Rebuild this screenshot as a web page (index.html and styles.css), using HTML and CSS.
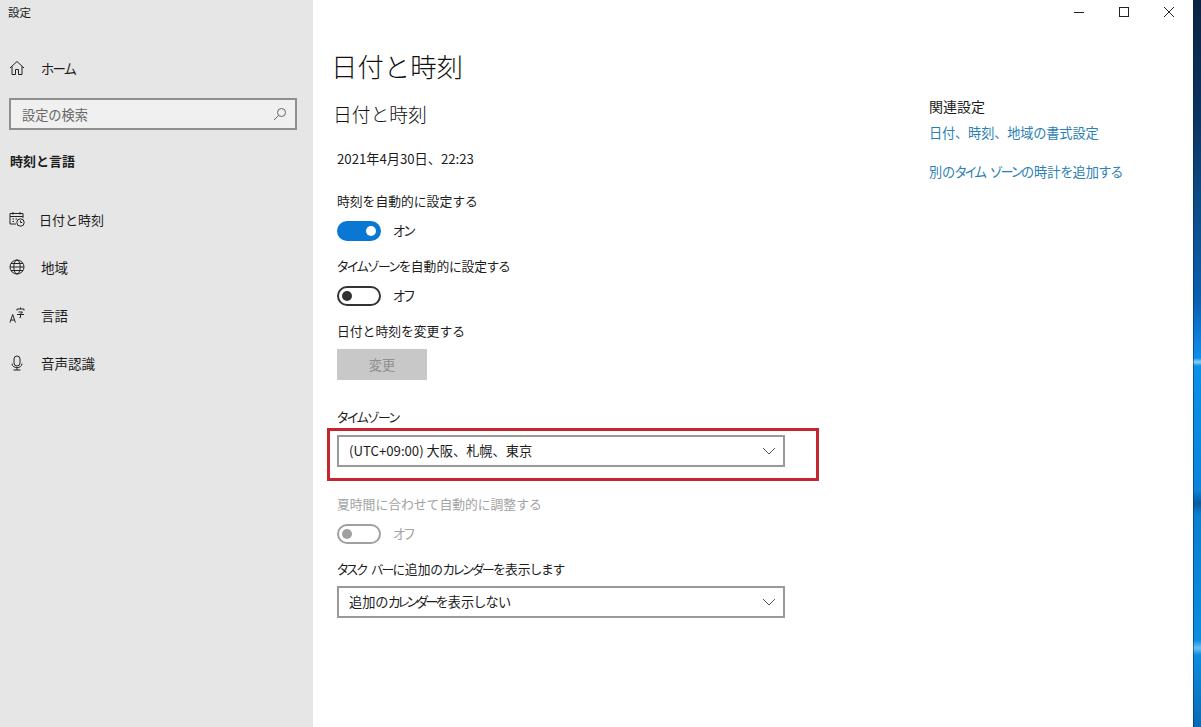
FILE: index.html
```html
<!DOCTYPE html>
<html lang="ja">
<head>
<meta charset="utf-8">
<title>設定</title>
<link rel="stylesheet" href="styles.css">
</head>
<body>
<div class="window">
  <aside class="sidebar">
    <div class="app-title">設定</div>
    <div class="nav-item home">
      <svg class="icon" viewBox="0 0 16 16"><path d="M1 8 8 1.500 15 8M3 6.500V14.500H6.500V9.500H9.500V14.500H13V6.500"/></svg>
      <span class="kana k-wide">ホーム</span>
    </div>
    <div class="search">
      <span>設定の検索</span>
      <svg class="search-icon" viewBox="0 0 14 14"><circle cx="8.500" cy="5.500" r="4"/><path d="M5.500 8.500 1 13"/></svg>
    </div>
    <div class="section-title">時刻と言語</div>
    <nav class="nav">
      <div class="nav-item tight">
        <svg class="icon" viewBox="0 0 16 16"><path d="M7 13H1V2.500H14V7M1 5.500H14M4 1V3.500M11 1V3.500M3.500 8H5M6.500 8H8M3.500 10.500H5"/><circle cx="11.500" cy="11.500" r="3.700"/><path d="M11.500 9.500V11.500H13.200"/></svg>
        <span>日付と時刻</span>
      </div>
      <div class="nav-item">
        <svg class="icon" viewBox="0 0 16 16"><circle cx="8" cy="8" r="7"/><ellipse cx="8" cy="8" rx="3.200" ry="7"/><path d="M1 8H15M2 4.500H14M2 11.500H14"/></svg>
        <span>地域</span>
      </div>
      <div class="nav-item">
        <svg class="icon" viewBox="0 0 16 16"><path d="M1 15.500 3.700 7.500 6.400 15.500M1.800 13H5.600M8 3.500V2H15V3.500M9.500 5H13.500L11.500 7V10.500L10.500 10.500M8 7.500H15M11.500 .5V2"/></svg>
        <span>言語</span>
      </div>
      <div class="nav-item">
        <svg class="icon" viewBox="0 0 16 16"><rect x="5" y="1" width="6" height="10" rx="3"/><path d="M3 8.500C3 14 13 14 13 8.500M8 12.500V15M4.500 15H11.500"/></svg>
        <span>音声認識</span>
      </div>
    </nav>
  </aside>
  <main class="main">
    <div class="titlebar">
      <svg class="win-btn" viewBox="0 0 12 12"><path d="M1 6.500H11"/></svg>
      <svg class="win-btn" viewBox="0 0 12 12"><rect x="1.500" y="1.500" width="9" height="9"/></svg>
      <svg class="win-btn" viewBox="0 0 12 12"><path d="M1 1 11 11M11 1 1 11"/></svg>
    </div>
    <div class="columns">
      <section class="content">
        <h1>日付と時刻</h1>
        <h2>日付と時刻</h2>
        <div class="now">2021年4月30日、22:23</div>
        <div class="label auto-time">時刻を自動的に設定する</div>
        <div class="toggle-row">
          <span class="toggle on"></span><span class="kana k-wide toggle-text">オン</span>
        </div>
        <div class="label kana"><span class="k-mid">タイムゾーン</span>を自動的に設定する</div>
        <div class="toggle-row">
          <span class="toggle"></span><span class="kana k-wide toggle-text">オフ</span>
        </div>
        <div class="label">日付と時刻を変更する</div>
        <div class="change-btn">変更</div>
        <div class="label kana tz-label"><span class="k-mid">タイムゾーン</span></div>
        <div class="select tz-select">
          <span>(UTC+09:00) 大阪、札幌、東京</span>
          <svg class="chevron" viewBox="0 0 14 8"><path d="M1 1 7 7 13 1"/></svg>
          <div class="highlight"></div>
        </div>
        <div class="label dst-label disabled">夏時間に合わせて自動的に調整する</div>
        <div class="toggle-row dst-row disabled">
          <span class="toggle off-disabled"></span><span class="kana k-wide toggle-text">オフ</span>
        </div>
        <div class="label kana"><span class="k-spaced">タスク バー</span>に追加の<span class="k-spaced">カレンダー</span>を表示します</div>
        <div class="select calendar-select">
          <span class="kana">追加の<span class="k-tight">カレンダー</span>を表示しない</span>
          <svg class="chevron" viewBox="0 0 14 8"><path d="M1 1 7 7 13 1"/></svg>
        </div>
      </section>
      <section class="related">
        <div class="related-title">関連設定</div>
        <a class="link first">日付、時刻、地域の書式設定</a>
        <a class="link second kana">別の<span class="k-spaced">タイム ゾーン</span>の時計を追加する</a>
      </section>
    </div>
  </main>
  <div class="desktop"></div>
</div>
</body>
</html>
```

FILE: styles.css
```css
* { box-sizing: border-box; }
html, body { margin: 0; height: 100%; }
body {
  font-family: "Noto Sans CJK JP", "Noto Sans", sans-serif;
  color: #1c1c1c;
  background: #fff;
  overflow: hidden;
}
.kana { font-feature-settings: "palt"; }
.k-wide { letter-spacing: -1.500px; }
.k-mid { letter-spacing: -1.200px; }
.k-spaced { letter-spacing: -1.700px; word-spacing: 4px; }
.k-tight { letter-spacing: -2.600px; }
.window { display: flex; width: 1201px; height: 727px; }

.sidebar { width: 313px; flex: none; background: #e6e6e6; padding: 0 16px 0 9px; font-size: 13.500px; }
.app-title { font-size: 11.500px; line-height: 14px; padding-top: 5px; height: 20px; margin-left: -1px; }
.icon { width: 16px; height: 16px; flex: none; fill: none; stroke: #222; stroke-width: 1; }
.nav-item { display: flex; align-items: center; height: 48px; gap: 16px; }
.nav-item.tight { gap: 14px; font-size: 13px; }
.home { height: 24px; margin-top: 36px; }
.search {
  display: flex; align-items: center; justify-content: space-between;
  height: 32px; margin-top: 18px; padding: 0 8px 0 11px;
  background: #f0f0f0; border: 2px solid #8f8f8f; color: #666; font-size: 13.200px;
}
.search-icon { width: 14px; height: 14px; fill: none; stroke: #666; stroke-width: 1; }
.section-title { font-size: 13px; font-weight: 700; line-height: 20px; margin-top: 21px; margin-left: 1px; }
.nav { margin-top: 24px; }

.main { flex: 1; min-width: 0; display: flex; flex-direction: column; }
.titlebar { display: flex; justify-content: flex-end; align-items: center; height: 24px; gap: 33px; padding-right: 18px; }
.win-btn { width: 12px; height: 12px; fill: none; stroke: #222; stroke-width: 1; }
.columns { display: flex; }
.content { width: 616px; padding-left: 20px; font-size: 13px; }
h1 { margin: 22px 0 0 -2px; font-size: 26.400px; font-weight: 300; line-height: 40px; color: #111; }
h2 { margin: 15px 0 0; font-size: 18.800px; font-weight: 300; line-height: 26px; color: #111; }
.now { margin: 22px 0 0 4px; line-height: 20px; font-size: 13.200px; }
.label { margin-left: 4px; line-height: 20px; font-size: 12.800px; }
.auto-time { margin-top: 22px; }
.toggle-row { display: flex; align-items: center; gap: 12px; height: 20px; margin: 10px 0 15px 4px; font-size: 13.200px; }
.toggle-text { padding-bottom: 2px; }
.toggle { position: relative; width: 44px; height: 20px; border-radius: 10px; border: 2px solid #333; background: #fff; }
.toggle::after { content: ""; position: absolute; left: 3px; top: 3px; width: 10px; height: 10px; border-radius: 50%; background: #333; }
.toggle.on { background: #0878d4; border-color: #0878d4; }
.toggle.on::after { left: auto; right: 3px; background: #fff; }
.toggle.off-disabled { border-color: #a0a0a0; }
.toggle.off-disabled::after { background: #a0a0a0; }
.disabled { color: #a3a3a3; }
.change-btn {
  display: flex; align-items: center; justify-content: center;
  width: 90px; height: 31px; margin: 8px 0 0 4px;
  background: #c8c8c8; color: #8f8f8f; font-size: 13.200px;
}
.tz-label { margin-top: 27px; }
.select {
  position: relative; display: flex; align-items: center; justify-content: space-between;
  width: 448px; height: 32px; margin: 8px 0 0 4px; padding: 0 7px 1px 10px;
  border: 2px solid #999; font-size: 13.200px;
}
.chevron { width: 14px; height: 8px; fill: none; stroke: #555; stroke-width: 1; }
.highlight { position: absolute; left: -12px; top: -9px; width: 492px; height: 53px; border: 3px solid #c5252f; pointer-events: none; }
.dst-label { margin-top: 27px; }
.toggle-row.dst-row { margin: 10px 0 15px 4px; }
.select.calendar-select { margin-top: 7px; }
.related { padding: 72px 0 0 0; font-size: 13.200px; }
.related-title { line-height: 20px; font-size: 14px; }
.link { display: block; color: #2a80b2; line-height: 20px; margin-top: 7px; }
.link.first { letter-spacing: -.15px; }
.link.second { margin-top: 19px; }

.desktop {
  width: 8px; flex: none;
  box-shadow: inset 1px 0 0 rgba(0, 30, 70, .5);
  background: linear-gradient(#0a2342 0, #0b3563 120px, #0d4a85 200px, #0a5fae 300px, #0f80dc 340px, #0a90e8 358px, #8fd0f5 362px, #0a90e8 366px, #0a84da 490px, #0a5a9f 503px, #0a7fd0 515px, #0a8de0 640px, #6fc0ef 648px, #0a8de0 655px, #0a6ab5 727px);
}
```
